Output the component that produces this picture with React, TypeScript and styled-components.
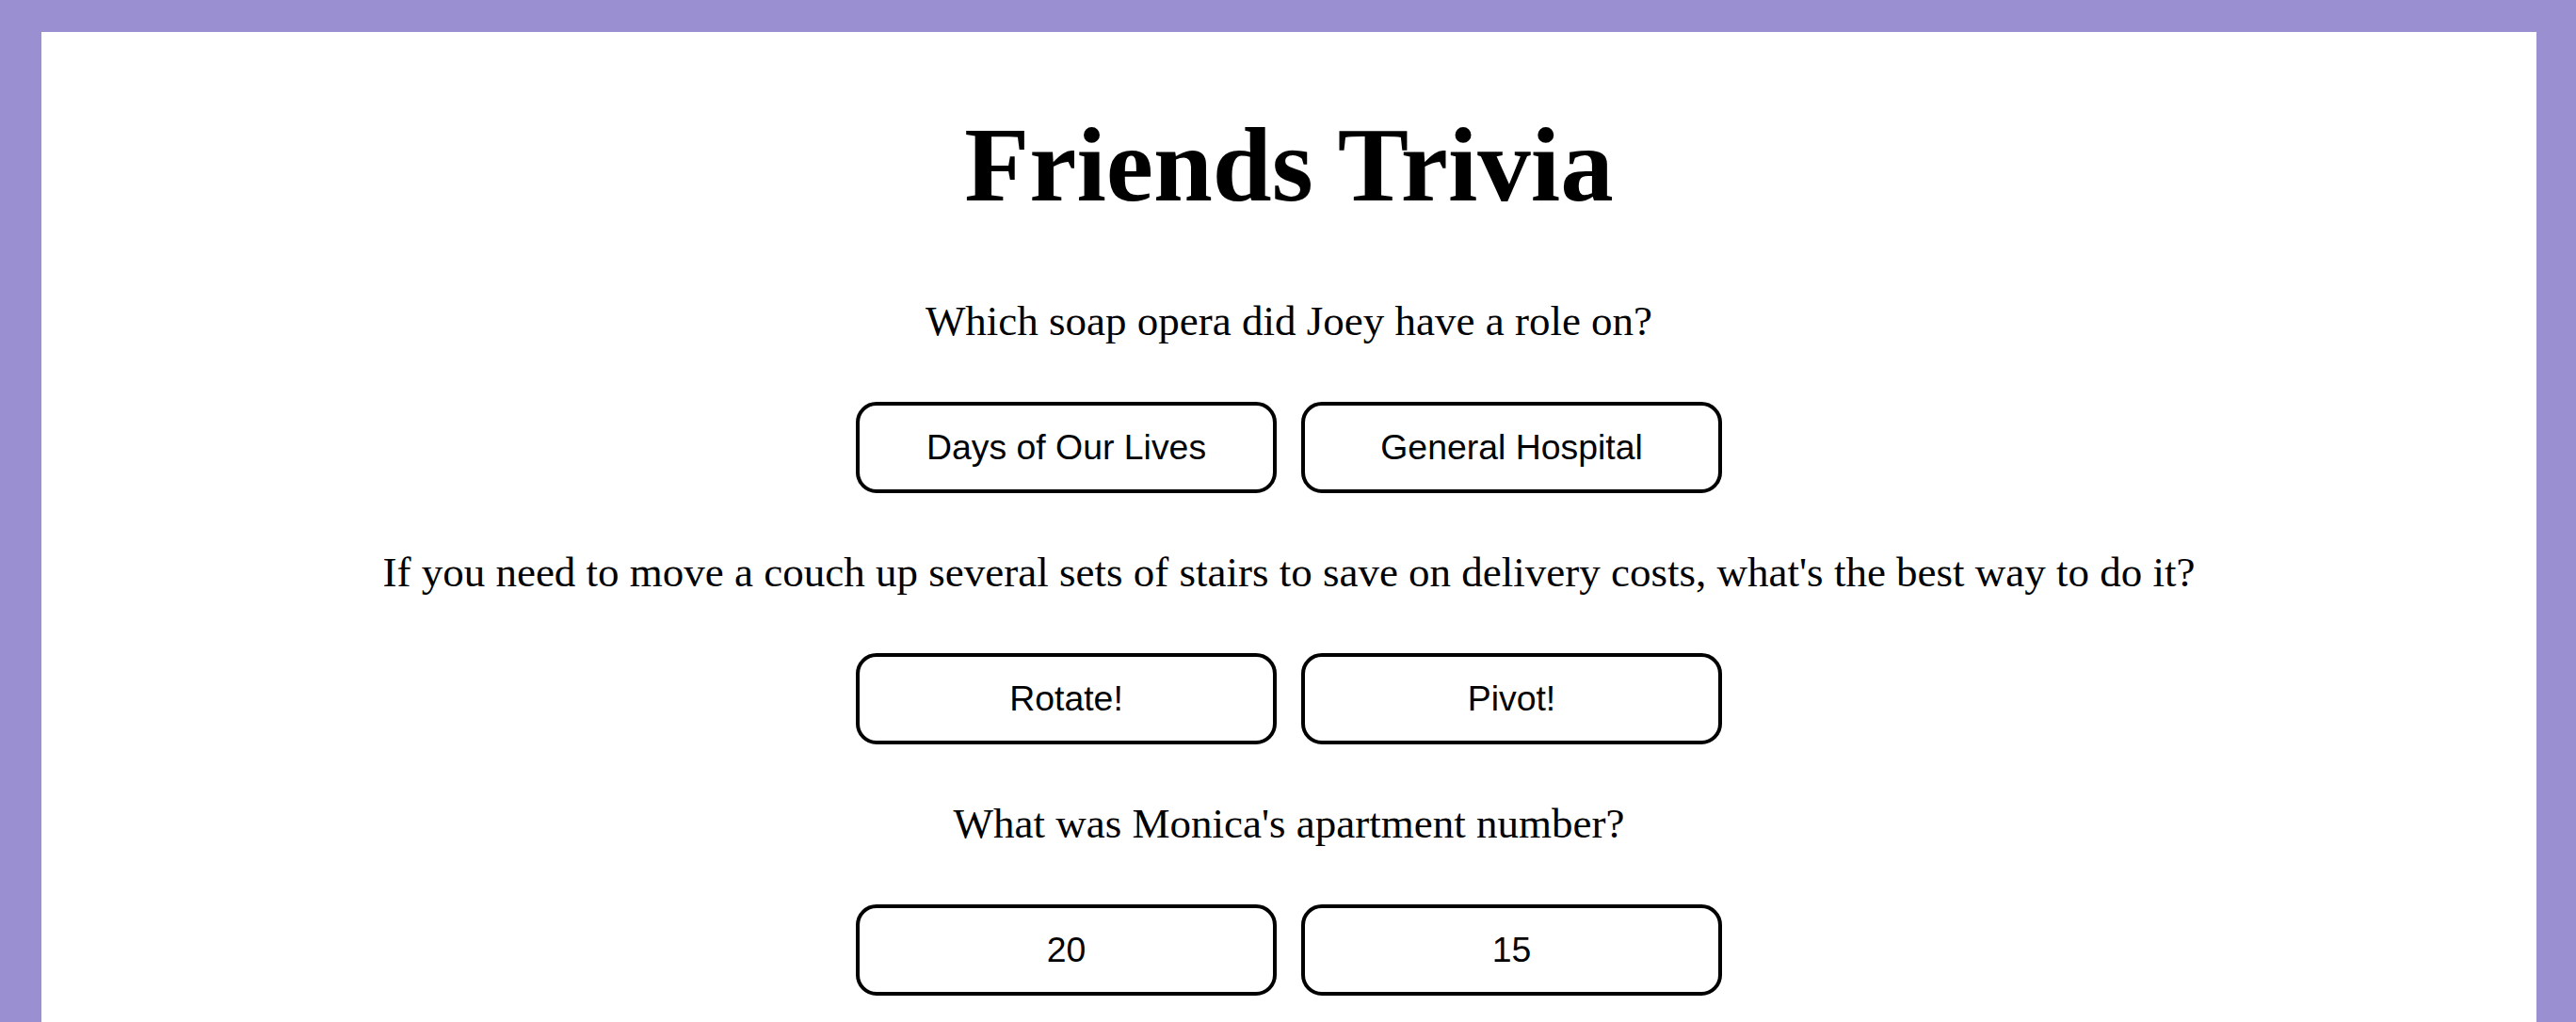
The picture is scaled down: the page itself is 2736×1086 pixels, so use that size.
import React from "react";
import styled, { createGlobalStyle } from "styled-components";

const GlobalStyle = createGlobalStyle`
  html, body {
    margin: 0;
    padding: 0;
    background: #9a8fd1;
  }
  body {
    padding: 34px 42px 0 44px;
    font-family: "Liberation Serif", "Times New Roman", serif;
    color: #000;
  }
`;

const Card = styled.main`
  background: #ffffff;
  min-height: 1100px;
  display: flex;
  flex-direction: column;
  align-items: center;
`;

const Title = styled.h1`
  margin: 84px 0 88px;
  font-family: "Liberation Serif", "Times New Roman", serif;
  font-weight: 700;
  font-size: 113px;
  line-height: 1;
  text-align: center;
`;

const Block = styled.section`
  display: flex;
  flex-direction: column;
  align-items: center;
  margin-bottom: 62px;
`;

const Question = styled.p`
  margin: 0 0 63px;
  font-size: 45px;
  line-height: 1;
  text-align: center;
`;

const Answers = styled.div`
  display: flex;
  gap: 26px;
`;

const Answer = styled.button`
  box-sizing: border-box;
  width: 447px;
  height: 97px;
  border: 4px solid #000;
  border-radius: 22px;
  background: #fff;
  color: #000;
  font-family: "Liberation Sans", Arial, sans-serif;
  font-size: 37.4px;
  display: flex;
  align-items: center;
  justify-content: center;
  padding: 0;
  cursor: pointer;
`;

const questions = [
  {
    q: "Which soap opera did Joey have a role on?",
    a: ["Days of Our Lives", "General Hospital"],
  },
  {
    q: "If you need to move a couch up several sets of stairs to save on delivery costs, what's the best way to do it?",
    a: ["Rotate!", "Pivot!"],
  },
  {
    q: "What was Monica's apartment number?",
    a: ["20", "15"],
  },
];

export default function App() {
  return (
    <>
      <GlobalStyle />
      <Card>
        <Title>Friends Trivia</Title>
        {questions.map((item) => (
          <Block key={item.q}>
            <Question>{item.q}</Question>
            <Answers>
              {item.a.map((ans) => (
                <Answer key={ans} type="button">
                  {ans}
                </Answer>
              ))}
            </Answers>
          </Block>
        ))}
      </Card>
    </>
  );
}
